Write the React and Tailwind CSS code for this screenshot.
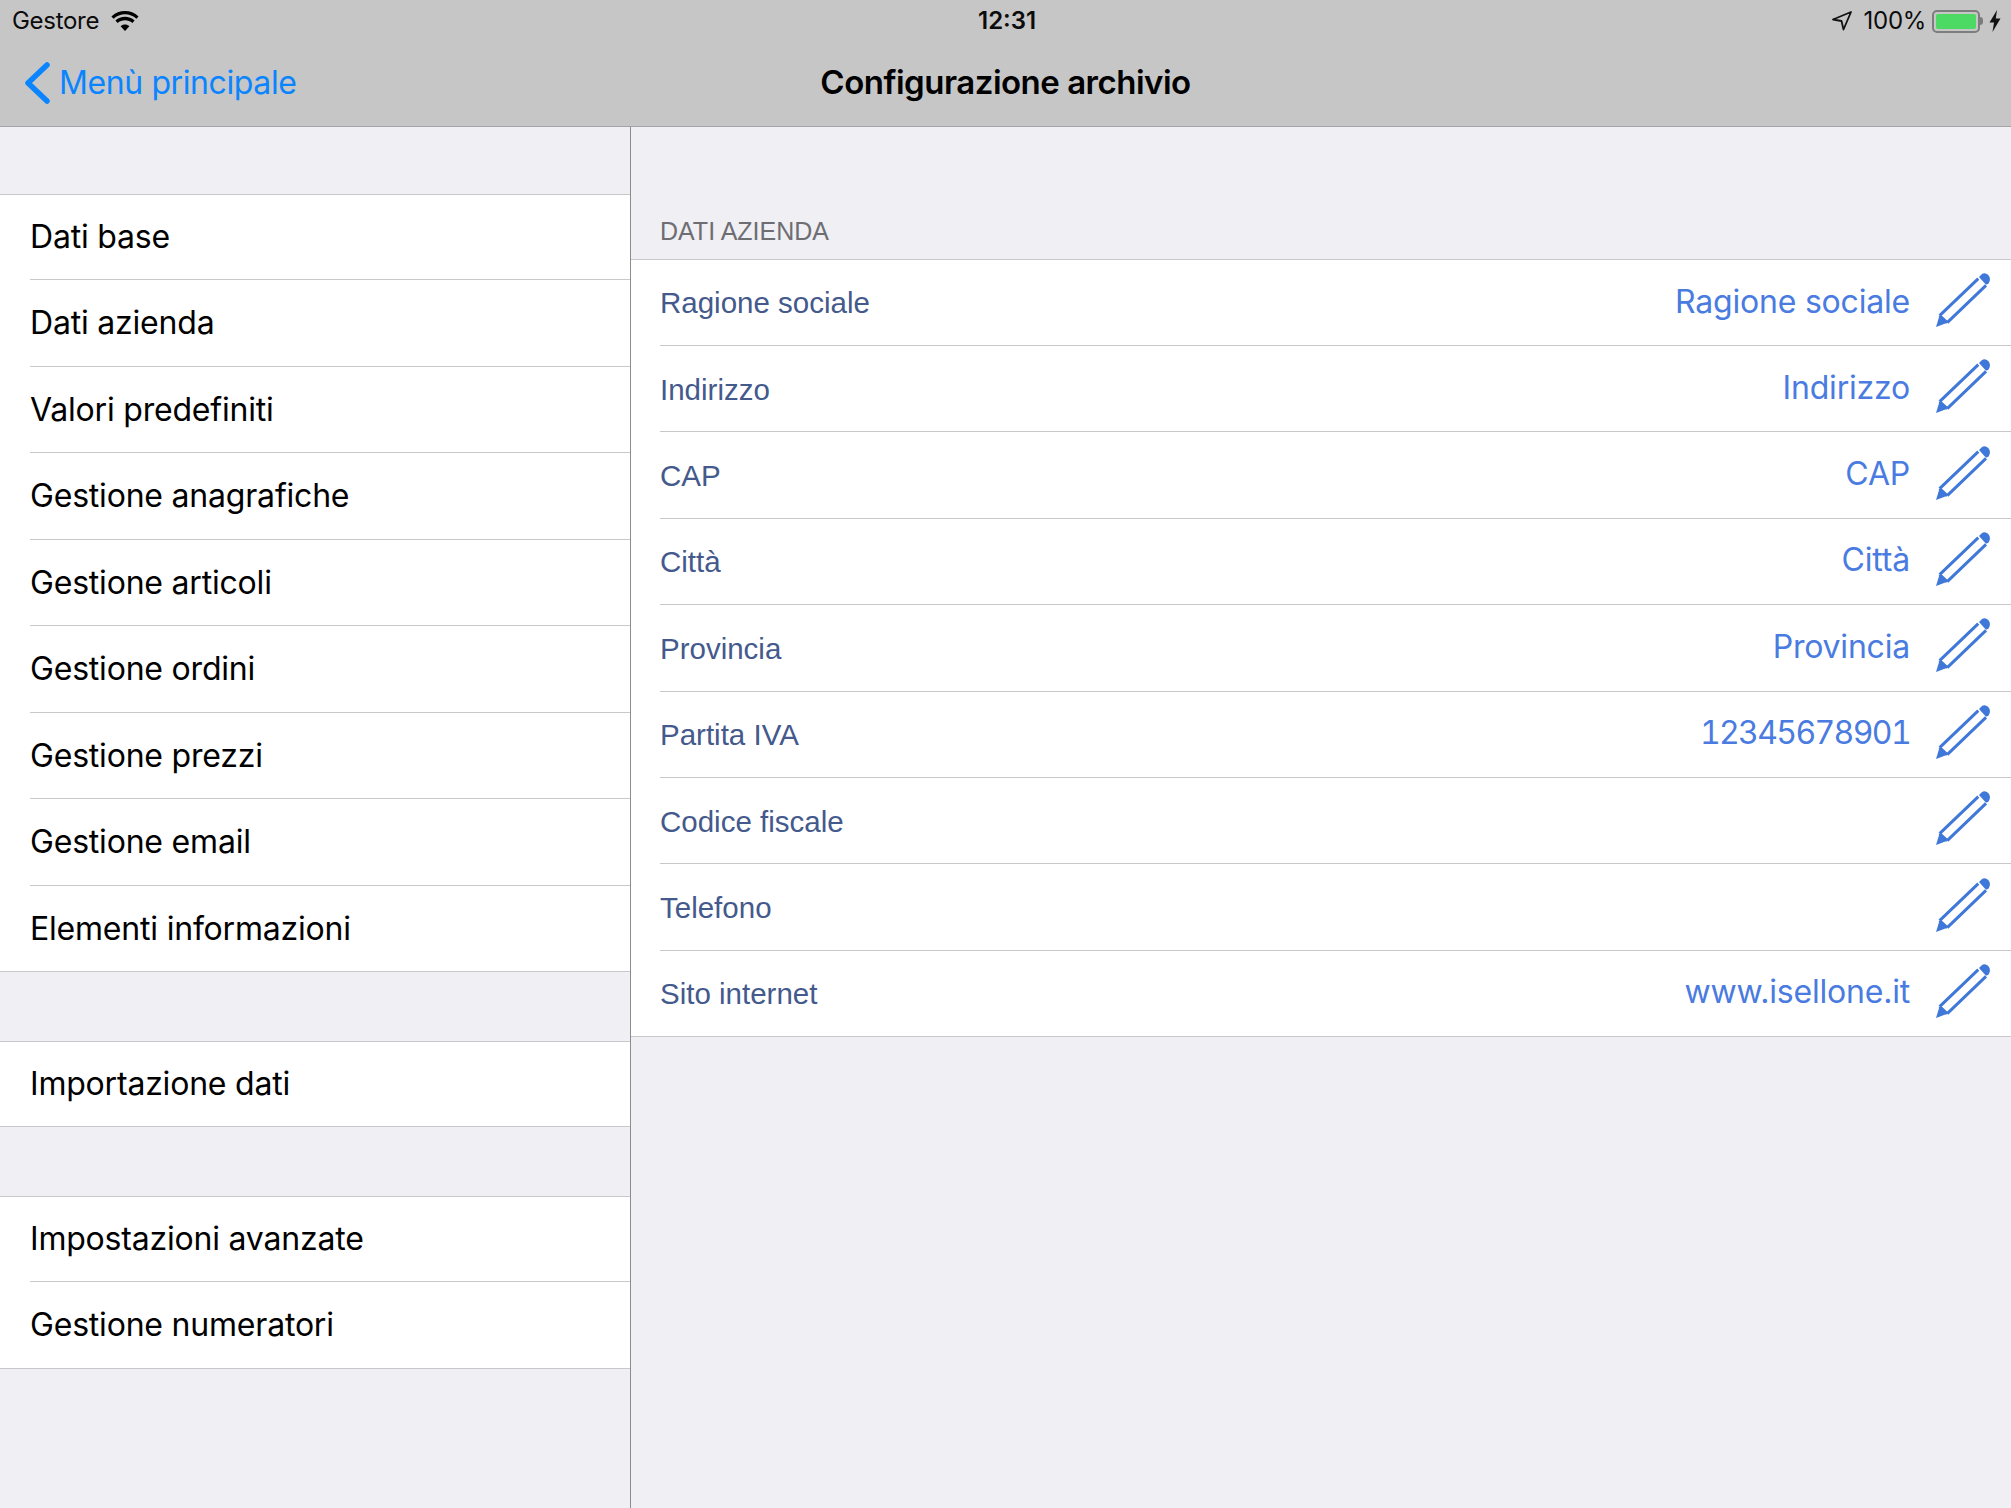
const menuGroups = [
  ["Dati base", "Dati azienda", "Valori predefiniti", "Gestione anagrafiche", "Gestione articoli", "Gestione ordini", "Gestione prezzi", "Gestione email", "Elementi informazioni"],
  ["Importazione dati"],
  ["Impostazioni avanzate", "Gestione numeratori"],
];

const fields = [
  ["Ragione sociale", "Ragione sociale"],
  ["Indirizzo", "Indirizzo"],
  ["CAP", "CAP"],
  ["Città", "Città"],
  ["Provincia", "Provincia"],
  ["Partita IVA", "12345678901"],
  ["Codice fiscale", ""],
  ["Telefono", ""],
  ["Sito internet", "www.isellone.it"],
];

function Pencil() {
  return (
    <svg width="54" height="54" viewBox="0 0 54 54" fill="none" className="mb-[5px] shrink-0">
      <path d="M0 54 L3.3 43.3 L10.7 50 Z" fill="#3f78d8" />
      <path d="M3.6 42.6 L42.3 5.7 M11.2 49.6 L50 12.3 M3.6 42.6 L11.2 49.6" stroke="#3f78d8" strokeWidth="3" />
      <path d="M43 4 L46 1 C48 -0.5 51 0 53 3 C54.5 5.5 54 8.5 52.3 10.7 L50 11.7 Z" fill="#3f78d8" />
    </svg>
  );
}

function Wifi() {
  return (
    <svg width="28" height="20" viewBox="0 0 28 20">
      <path d="M14 20 L9.6 15.2 C12 13 16 13 18.4 15.2 Z" fill="#000" />
      <path d="M6.6 12 C10.6 8.2 17.4 8.2 21.4 12 L23.6 9.6 C18.2 4.6 9.8 4.6 4.4 9.6 Z" fill="#000" />
      <path d="M2.6 7.8 C8.8 1.8 19.2 1.8 25.4 7.8 L27.6 5.4 C20 -1.8 8 -1.8 0.4 5.4 Z" fill="#000" />
    </svg>
  );
}

export default function App() {
  return (
    <div className="flex h-[1508px] w-[2011px] flex-col overflow-hidden bg-[#efeff4] font-['Inter',sans-serif]">
      <header className="h-[127px] shrink-0 border-b border-[#a4a4a6] bg-[#c6c6c6]">
        <div className="relative flex h-[42px] items-center justify-between pl-[12px] pr-[10px] text-[24px] text-[#0c0c0c]">
          <div className="flex items-center gap-[12px]">
            <span className="tracking-[-0.3px]">Gestore</span>
            <Wifi />
          </div>
          <span className="absolute left-[978px] text-[24px] font-semibold">12:31</span>
          <div className="flex items-center">
            <svg width="20" height="20" viewBox="0 0 20 20" className="mr-[12px]">
              <path d="M19 1 L1 8.5 L9.5 10 L11.5 18.5 Z" fill="none" stroke="#111" strokeWidth="1.8" strokeLinejoin="round" />
            </svg>
            <span className="mr-[6px] tracking-[-0.3px]">100%</span>
            <div className="flex h-[23px] w-[48px] items-center rounded-[5px] border-2 border-[#7d7d7d] p-[2px]">
              <div className="h-full w-full rounded-[2px] bg-[#4cd964]" />
            </div>
            <div className="mr-[6px] h-[8px] w-[3px] rounded-r-sm bg-[#7d7d7d]" />
            <svg width="12" height="22" viewBox="0 0 12 22">
              <path d="M8 0 L0.5 12.5 H5 L3.5 22 L11.5 8.5 H6.8 Z" fill="#111" />
            </svg>
          </div>
        </div>
        <div className="relative flex h-[82px] items-center">
          <div className="flex items-center pl-[23px] text-[32px] text-[#0a84ff]">
            <svg width="28" height="42" viewBox="0 0 28 42" fill="none" className="mr-[8px]">
              <path d="M24 3 L5 21 L24 39" stroke="#0a84ff" strokeWidth="5.5" strokeLinecap="round" strokeLinejoin="round" />
            </svg>
            <span className="tracking-[-0.4px]">Menù principale</span>
          </div>
          <h1 className="absolute inset-x-0 text-center text-[33px] font-semibold tracking-[-0.5px] text-black">Configurazione archivio</h1>
        </div>
      </header>

      <div className="flex min-h-0 flex-1">
        <aside className="w-[631px] shrink-0 border-r border-[#8c8c90] pt-[67px]">
          <div className="flex flex-col gap-[69px]">
            {menuGroups.map((group) => (
              <ul key={group[0]} className="border-y border-[#c8c7cc] bg-white">
                {group.map((item, index) => (
                  <li key={item} className="pl-[30px]">
                    <div className={`flex items-center text-[32px] tracking-[-0.2px] text-black ${index ? "h-[86.5px] border-t border-[#c8c7cc] pt-[1px]" : "h-[84px]"}`}>
                      {item}
                    </div>
                  </li>
                ))}
              </ul>
            ))}
          </div>
        </aside>

        <main className="min-w-0 flex-1">
          <h2 className="flex h-[132px] items-end pb-[9px] pl-[29px] font-['Liberation_Sans',sans-serif] text-[25px] text-[#6d6d72]">DATI AZIENDA</h2>
          <ul className="border-y border-[#c8c7cc] bg-white">
            {fields.map(([label, value], index) => (
              <li key={label} className="pl-[29px]">
                <div className={`flex items-center pr-[21px] ${index ? "h-[86.4px] border-t border-[#c8c7cc]" : "h-[85px]"}`}>
                  <span className="pt-[2px] font-['Liberation_Sans',sans-serif] text-[29.5px] text-[#44598c]">{label}</span>
                  <span className={`mb-[2px] ml-auto mr-[26px] text-[32px] text-[#4a7be0] ${/^\d+$/.test(value) ? "tracking-[-1.65px] tabular-nums" : "tracking-[-0.2px]"}`}>{value}</span>
                  <Pencil />
                </div>
              </li>
            ))}
          </ul>
        </main>
      </div>
    </div>
  );
}
